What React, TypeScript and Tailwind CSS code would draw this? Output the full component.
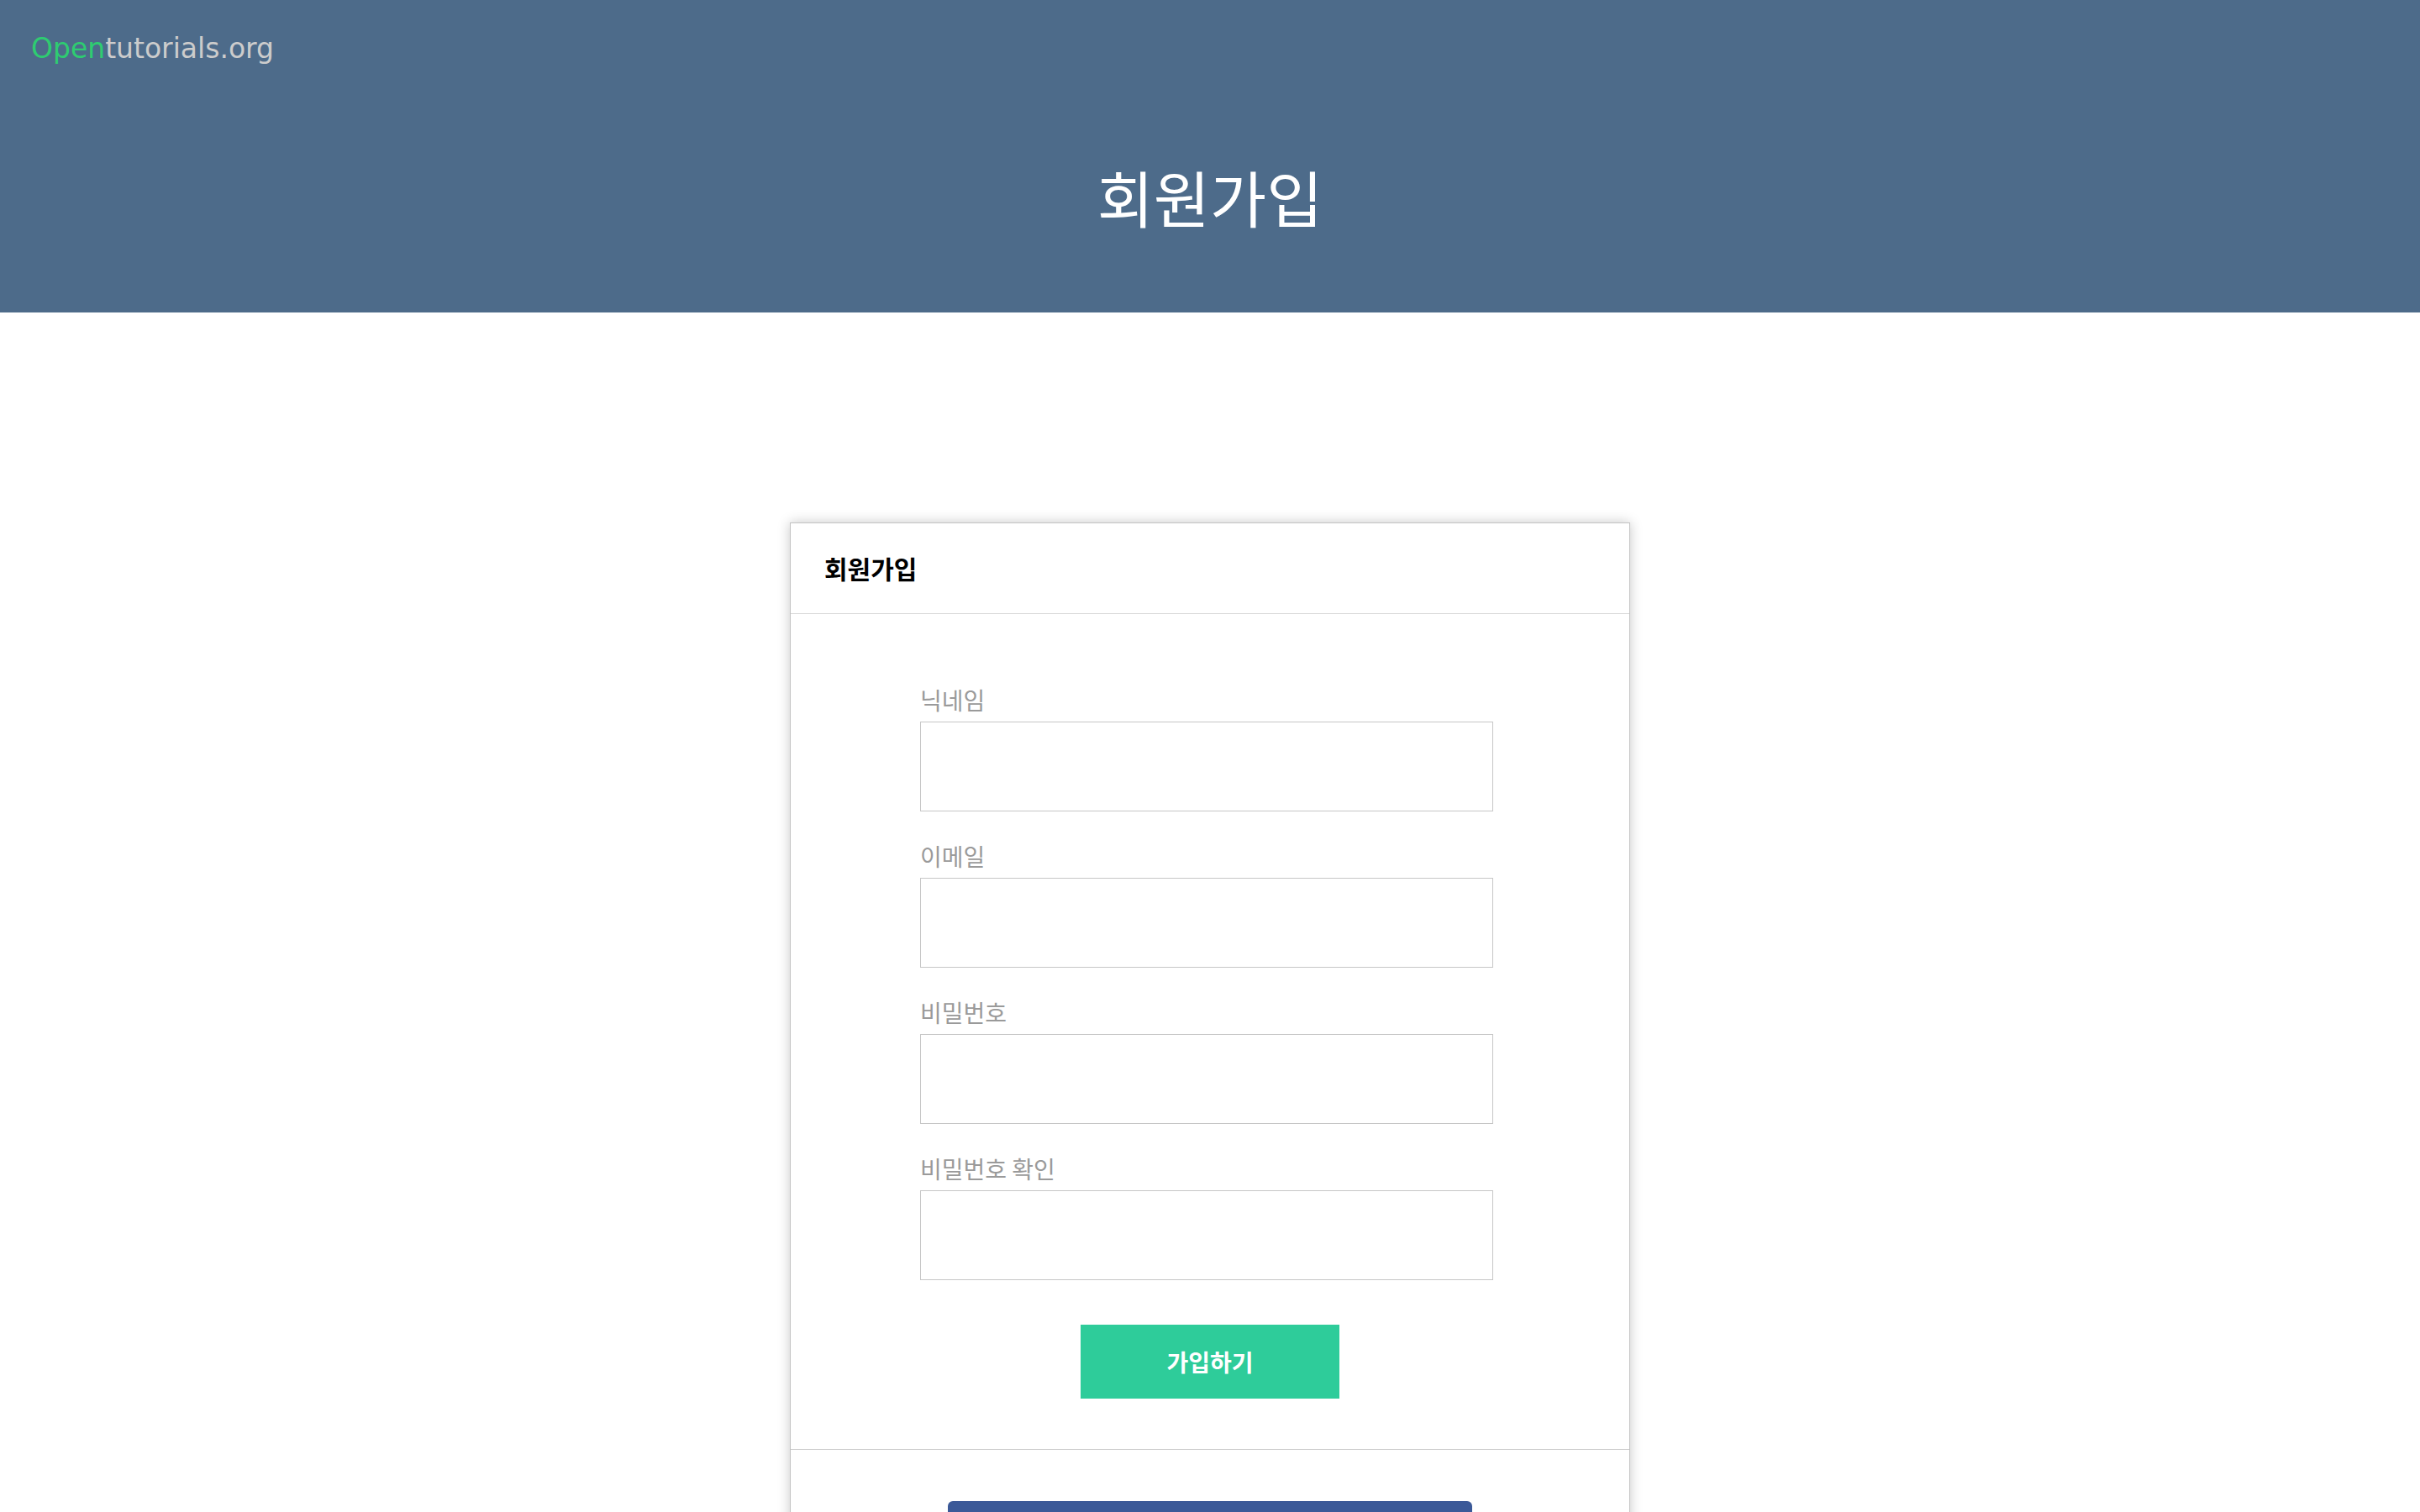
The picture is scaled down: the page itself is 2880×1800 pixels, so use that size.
import React from 'react';

const fields = ['닉네임', '이메일', '비밀번호', '비밀번호 확인'];

const kr = { fontFamily: '"Noto Sans CJK KR", "Noto Sans", sans-serif' };

export default function App() {
  return (
    <div className="min-h-screen bg-white" style={kr}>
      <header className="h-[372px] bg-[#4d6b8a]">
        <div
          className="pl-[37px] pt-[39px] text-[33px] leading-[38px]"
          style={{ fontFamily: '"DejaVu Sans", Verdana, sans-serif' }}
        >
          <span className="text-[#2ecc71]">Open</span>
          <span className="text-[#cccccc]">tutorials.org</span>
        </div>
        <h1 className="mt-[121px] text-center text-[73px] font-normal leading-[70px] text-white">
          회원가입
        </h1>
      </header>

      <div className="mx-auto mt-[250px] w-[1000px] border border-[#c2c2c2] bg-white shadow-[0_0_14px_rgba(0,0,0,0.22)]">
        <div className="flex h-[108px] items-center border-b border-[#d8d8d8] px-[40px]">
          <h2 className="text-[30px] font-bold text-black">회원가입</h2>
        </div>

        <div className="pb-[60px] pt-[84px]">
          <form className="mx-auto flex w-[690px] flex-col gap-[35px]">
            {fields.map((label) => (
              <div key={label}>
                <label className="mb-[8px] block text-[28px] leading-[36px] text-[#9a9a9a]">
                  {label}
                </label>
                <input
                  type={label.startsWith('비밀번호') ? 'password' : 'text'}
                  className="block h-[107px] w-[682px] border border-[#c6c6c6] bg-white px-4 text-[26px] outline-none"
                />
              </div>
            ))}
          </form>
          <button
            type="button"
            className="mx-auto mt-[53px] flex h-[88px] w-[308px] items-center justify-center bg-[#2ecc9a] text-[28px] font-bold text-white"
          >
            가입하기
          </button>
        </div>

        <div className="border-t border-[#cccccc] pb-[60px] pt-[61px]">
          <div className="mx-auto h-[90px] w-[624px] rounded-[6px] bg-[#3b5998]" />
        </div>
      </div>
    </div>
  );
}
